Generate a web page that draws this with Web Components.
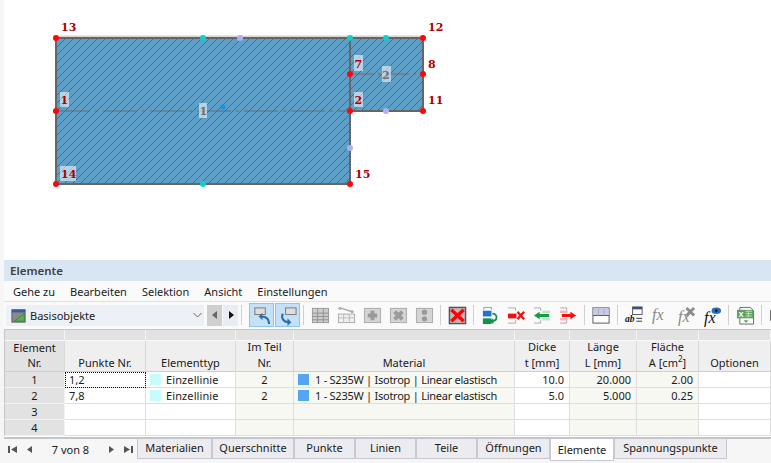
<!DOCTYPE html>
<html lang="de">
<head>
<meta charset="utf-8">
<title>Elemente</title>
<style>
  html, body { margin: 0; padding: 0; background: #f6f6f6; }
  body { width: 771px; height: 463px; overflow: hidden; font-family: "Noto Sans", "Liberation Sans", sans-serif; }
</style>
</head>
<body>
<fe-app>
  <fe-drawing></fe-drawing>
  <fe-panel title="Elemente">
    <fe-menu></fe-menu>
    <fe-toolbar></fe-toolbar>
    <fe-table></fe-table>
    <fe-tabs></fe-tabs>
  </fe-panel>
</fe-app>
<script>
(function() {
  var FONT = '"Noto Sans", "Liberation Sans", sans-serif'

  class FeApp extends HTMLElement {
    constructor() {
      super()
      this.attachShadow({ mode: 'open' }).innerHTML =
        '<style>:host{display:flex;flex-direction:column;width:771px;height:463px;padding-left:4px;box-sizing:border-box;background:#f6f6f6;color:#1a1a1a;font:11px ' + FONT + '}</style><slot></slot>'
    }
  }

  class FeDrawing extends HTMLElement {
    constructor() {
      super()
      var nodes = [[56,38],[423,38],[423,111],[350,111],[350,184],[56,184],[56,111],[350,74],[423,74]]
      var teal = [[203,38],[350,38],[386,38],[203,184]]
      var lilac = [[240,38],[386,111],[350,148]]
      function dots(list, color) {
        return list.map(function(p) {
          return '<circle cx="' + p[0] + '" cy="' + p[1] + '" r="3" fill="' + color + '"/>'
        }).join('')
      }
      function label(t, x, y, bx, by, bw, bh) {
        var box = bw ? '<rect x="' + bx + '" y="' + by + '" width="' + bw + '" height="' + bh + '" fill="#fff" fill-opacity=".55"/>' : ''
        return box + '<text x="' + x + '" y="' + y + '">' + t + '</text>'
      }
      this.attachShadow({ mode: 'open' }).innerHTML =
        '<style>:host{display:block;height:260px;background:#fff;flex:none}' +
        'svg{display:block}' +
        'text{font:bold 11px "DejaVu Serif",serif;fill:#a80000}' +
        '.m text{fill:#6e6e6e}</style>' +
        '<svg width="767" height="260" viewBox="4 0 767 260">' +
        '<defs><pattern id="h" width="8" height="8" patternUnits="userSpaceOnUse">' +
        '<rect width="8" height="8" fill="#5d9fc7"/><path d="M-1 1 1 -1M0 8 8 0M7 9 9 7" stroke="#5a6a75" stroke-width="1" fill="none"/></pattern></defs>' +
        '<path d="M56 37H423" stroke="#d6d6d6" stroke-width="3" fill="none"/>' +
        '<path d="M56 38H423V111H350V184H56Z" fill="url(#h)" stroke="#666" stroke-width="2"/>' +
        '<path d="M350 38V111" stroke="#666" stroke-width="2"/>' +
        '<path d="M56 111H350" stroke="#5f6f78" stroke-width="1" stroke-dasharray="34 5 3 5"/>' +
        '<path d="M350 74H423" stroke="#80695f" stroke-width="1" stroke-dasharray="24 4 3 4"/>' +
        dots(teal, '#12cfc9') + dots(lilac, '#aeb0f6') + dots(nodes, '#ff0606') +
        '<circle cx="223" cy="107" r="2.5" fill="#0a96f0"/>' +
        label('13', 61, 31) + label('12', 428, 31) + label('8', 428, 68) + label('11', 428, 104) + label('15', 355, 178) +
        label('1', 60.5, 104, 60, 92, 9, 15) + label('14', 61, 178, 60, 166, 16, 15) +
        label('7', 354.5, 68, 354, 55, 9, 16) + label('2', 354.5, 104, 354, 92, 9, 15) +
        '<g class="m">' + label('1', 199.5, 115, 199, 103, 8, 15) + label('2', 382, 79, 382, 66, 9, 16) + '</g>' +
        '</svg>'
    }
  }

  class FePanel extends HTMLElement {
    constructor() {
      super()
      this.attachShadow({ mode: 'open' }).innerHTML =
        '<style>:host{display:block;flex:1}' +
        '.head{height:21px;line-height:21px;background:#d8e5f3;padding-left:6px;font-weight:600;font-size:11.5px;color:#404040}</style>' +
        '<div class="head"></div><slot></slot>'
      this.shadowRoot.querySelector('.head').textContent = this.getAttribute('title')
    }
  }

  class FeMenu extends HTMLElement {
    constructor() {
      super()
      var items = ['Gehe zu', 'Bearbeiten', 'Selektion', 'Ansicht', 'Einstellungen']
      this.attachShadow({ mode: 'open' }).innerHTML =
        '<style>:host{display:flex;height:20px;line-height:22px;gap:15px;padding-left:9px;background:#fafafa;font-size:11px;box-sizing:border-box}' +
        'span{white-space:nowrap}</style>' +
        items.map(function(t) { return '<span>' + t + '</span>' }).join('')
    }
  }

  var ICONS = {
    base: '<rect x="1" y="2" width="15" height="14" fill="#8a8a8a" stroke="#555"/><rect x="1" y="2" width="15" height="3" fill="#3c5aa0"/><path d="M4 15 15 6V15Z" fill="#58b050" stroke="#2f7a2c" stroke-width=".7"/>',
    undo: '<rect x="3" y="2" width="11" height="7" fill="#ddd" stroke="#777"/><path d="M18 19C18 13 15 11 10 11" fill="none" stroke="#2c6ea8" stroke-width="2.2"/><path d="M7 11 11 7V15Z" fill="#2c6ea8"/>',
    redo: '<rect x="8" y="2" width="11" height="7" fill="#ddd" stroke="#777"/><path d="M5 8C3 13 6 17 11 17" fill="none" stroke="#2c6ea8" stroke-width="2.2"/><path d="M14 17 10 13V21Z" fill="#2c6ea8"/>',
    grid: '<rect x="1.5" y="2.5" width="17" height="15" fill="#ccc" stroke="#999"/><path d="M1.5 7.5H18.5M1.5 11H18.5M1.5 14.500H18.5M7 2.5V17.5M13 2.5V17.5" stroke="#8e8e8e"/>',
    link: '<rect x="1.5" y="8.500" width="17" height="9" fill="#f0f0f0" stroke="#aaa"/><path d="M1.500 12.500H18.500M7 8.500V17.500M13 8.500V17.500" stroke="#bbb"/><path d="M3 2 16 6" stroke="#aaa" stroke-width="1.500"/><circle cx="3" cy="2.500" r="1.500" fill="#aaa"/><circle cx="16" cy="6" r="1.500" fill="#aaa"/>',
    plus: '<rect x="1.500" y="2.500" width="17" height="15" fill="#d4d4d4" stroke="#aaa"/><path d="M10 5V15M5 10H15" stroke="#9a9a9a" stroke-width="4"/>',
    times: '<rect x="1.500" y="2.500" width="17" height="15" fill="#d4d4d4" stroke="#aaa"/><path d="M6 6 14 14M14 6 6 14" stroke="#9a9a9a" stroke-width="4"/>',
    dots: '<rect x="1.500" y="2.500" width="17" height="15" fill="#d4d4d4" stroke="#aaa"/><circle cx="10" cy="6.500" r="2.800" fill="#9a9a9a"/><circle cx="10" cy="13.500" r="2.800" fill="#9a9a9a"/>',
    del: '<rect x="1.500" y="1.500" width="17" height="17" fill="#bcbcbc" stroke="#555" stroke-width="1.500"/><path d="M3.500 4 16.500 16M16.500 4 3.500 16" stroke="#f00" stroke-width="3.500"/>',
    move: '<path d="M3 4V1.500H11V4" fill="none" stroke="#999"/><rect x="2" y="5" width="9" height="6" fill="#1e74c8"/><rect x="2" y="13" width="9" height="6" fill="#10924a"/><path d="M12 8C18 8 18 16 11 16" fill="none" stroke="#10924a" stroke-width="1.800"/><path d="M9 16 13 13V19Z" fill="#10924a"/>',
    rem: '<path d="M1 2H9V5M1 18H9V15" fill="none" stroke="#aaa"/><rect x="1" y="8" width="9" height="5" fill="#f01010"/><path d="M11 6 18 14M18 6 11 14" stroke="#f01010" stroke-width="2.400"/>',
    left: '<path d="M1 2H8V5M1 18H8V15" fill="none" stroke="#aaa"/><path d="M10 6H18M10 14H18" stroke="#bfe6cc" stroke-width="2.500"/><path d="M1 10 7 6V8.500H17V11.500H7V14Z" fill="#10a040"/>',
    right: '<path d="M1 2H8V5M1 18H8V15" fill="none" stroke="#aaa"/><path d="M1 6H9M1 14H9" stroke="#f6b4b4" stroke-width="2.500"/><path d="M18 10 12 6V8.500H3V11.500H12V14Z" fill="#f01010"/>',
    table: '<rect x="1" y="2" width="17" height="16" fill="#fff" stroke="#555"/><rect x="1.500" y="2.500" width="16" height="7.500" fill="#c9c9ee"/><path d="M1 10H18" stroke="#555"/><path d="M7 3V10M12.500 3V10" stroke="#aaa"/>',
    ab: '<rect x="8" y="1" width="10" height="8" fill="#fff" stroke="#555"/><rect x="8" y="1" width="10" height="2.500" fill="#3a4aa0"/><text x="0" y="17" font-family="Liberation Serif,serif" font-style="italic" font-weight="bold" font-size="10" fill="#111">ab</text><path d="M12 13H18M12 16H18" stroke="#333"/>',
    fx: '<text x="1" y="15" font-family="Liberation Serif,serif" font-style="italic" font-size="17" fill="#888">fx</text>',
    fxx: '<text x="1" y="17" font-family="Liberation Serif,serif" font-style="italic" font-size="17" fill="#888">fx</text><path d="M10 2 18 10M18 2 10 10" stroke="#8c8c8c" stroke-width="3"/>',
    fxe: '<text x="1" y="18" font-family="Liberation Serif,serif" font-style="italic" font-size="17" fill="#111">fx</text><ellipse cx="14" cy="5" rx="5" ry="3.500" fill="#2a70b8"/><circle cx="14" cy="5" r="1.500" fill="#123"/>',
    xls: '<path d="M4 1.500H15L18.500 5V19H4Z" fill="#fff" stroke="#666"/><rect x="1" y="4" width="17" height="9" fill="#5f9f5f"/><text x="2.500" y="11.500" font-family="Liberation Sans,sans-serif" font-weight="bold" font-size="8" fill="#fff">X</text><path d="M10 5.500H17M10 8H17M10 10.500H17M13 5V12" stroke="#d5ecd5" stroke-width=".8"/><path d="M8 15H13L10.500 18Z" fill="#5f9f5f"/>',
    print: '<path d="M5 5V1.500H14V5" fill="#fff" stroke="#666"/><rect x="1.500" y="5" width="17" height="10" fill="#ddd" stroke="#666"/><rect x="5" y="12" width="10" height="7" fill="#fff" stroke="#666"/>'
  }

  class FeTool extends HTMLElement {
    constructor() {
      super()
      this.attachShadow({ mode: 'open' }).innerHTML =
        '<style>:host{display:flex;align-items:center;justify-content:center;flex:none;width:26px;height:24px;box-sizing:border-box}' +
        ':host([on]){background:#c5e1f8;border:1px solid #90c4ee;width:25px}' +
        'svg{width:19px;height:19px;display:block;overflow:visible}</style>' +
        '<svg viewBox="0 0 20 20">' + ICONS[this.getAttribute('icon')] + '</svg>'
    }
  }

  class FeCombo extends HTMLElement {
    constructor() {
      super()
      this.attachShadow({ mode: 'open' }).innerHTML =
        '<style>:host{display:flex;align-items:center;flex:none;width:198px;height:21px;background:#edf0f6;font-size:11px;padding-left:5px;box-sizing:border-box}' +
        'svg{width:15px;height:15px;flex:none;margin-right:4px}span{flex:1}.c{margin-right:2px;width:9px;height:6px}</style>' +
        '<svg viewBox="0 0 17 17">' + ICONS.base + '</svg><span><slot></slot></span>' +
        '<svg class="c" viewBox="0 0 9 6"><path d="M.5 1 4.500 5 8.500 1" fill="none" stroke="#666"/></svg>'
    }
  }

  class FeToolbar extends HTMLElement {
    constructor() {
      super()
      var groups = [
        ['undo:on', 'redo:on'],
        ['grid', 'link', 'plus', 'times', 'dots'],
        ['del'],
        ['move', 'rem', 'left', 'right'],
        ['table'],
        ['ab', 'fx', 'fxx', 'fxe'],
        ['xls'],
        ['print']
      ]
      var html = groups.map(function(g, n) {
        return '<i' + (n === 0 ? ' class="a"' : '') + '></i>' + g.map(function(s) {
          var p = s.split(':')
          return '<fe-tool icon="' + p[0] + '"' + (p[1] ? ' on' : '') + '></fe-tool>'
        }).join('')
      }).join('')
      this.attachShadow({ mode: 'open' }).innerHTML =
        '<style>:host{display:flex;align-items:center;height:28px;padding:1px 0 2px 2px;box-sizing:border-box;background:#fafafa;border-top:1px solid #e0e0e0;overflow:hidden}' +
        'i{flex:none;width:1px;height:20px;background:#d0d0d0;margin:0 3px}i.a{margin-right:7px}' +
        '.nav{flex:none;width:15px;height:21px;display:flex;align-items:center;justify-content:center;background:#e8ecf4;margin-left:1px}' +
        '.nav.d{background:#cfcfcf;margin-left:3px}svg{width:6px;height:8px}' +
        'fe-tool[on]+fe-tool[on]{margin-left:1px}</style>' +
        '<fe-combo>Basisobjekte</fe-combo>' +
        '<div class="nav d"><svg viewBox="0 0 6 8"><path d="M5 0V8L0 4Z" fill="#666"/></svg></div>' +
        '<div class="nav"><svg viewBox="0 0 6 8"><path d="M1 0V8L6 4Z" fill="#111"/></svg></div>' + html
    }
  }

  class FeTable extends HTMLElement {
    constructor() {
      super()
      var cream = [0,0,0,1,1,0,1,1,0]
      var heads = [
        ['Element<br>Nr.', 'c first'], ['Punkte Nr.', 'c'], ['Elementtyp', 'c'], ['Im Teil<br>Nr.', 'c'], ['Material', 'c'],
        ['Dicke<br>t [mm]', 'c'], ['Länge<br>L [mm]', 'c'], ['Fläche<br>A [cm<sup>2</sup>]', 'c'], ['Optionen', 'c']
      ]
      var rows = [
        ['1', '1,2', 'Einzellinie', '2', '1 - S235W | Isotrop | Linear elastisch', '10.0', '20.000', '2.00', ''],
        ['2', '7,8', 'Einzellinie', '2', '1 - S235W | Isotrop | Linear elastisch', '5.0', '5.000', '0.25', ''],
        ['3', '', '', '', '', '', '', '', ''],
        ['4', '', '', '', '', '', '', '', '']
      ]
      var html = ''
      for (var i = 0; i < 9; i++) html += '<div class="band' + (i === 0 ? ' lead' : '') + '"></div>'
      heads.forEach(function(h) { html += '<div class="h ' + h[1] + '"><span>' + h[0] + '</span></div>' })
      rows.forEach(function(r, ri) {
        r.forEach(function(v, ci) {
          var cls = 'd'
          if (ci === 0) cls += ' no'
          if (cream[ci]) cls += ' cream'
          if (ci === 3) cls += ' mid'
          if (ci >= 5 && ci <= 7) cls += ' num'
          var inner = v
          if (ci === 1 && ri === 0) cls += ' focus'
          if (ci === 2 && v) inner = '<b class="sw s5" style="background:#c8fbfd"></b><span class="t">' + v + '</span>'
          if (ci === 4 && v) inner = '<b class="sw" style="background:#55a5f5"></b><span class="t2">' + v + '</span>'
          html += '<div class="' + cls + '">' + inner + '</div>'
        })
      })
      this.attachShadow({ mode: 'open' }).innerHTML =
        '<style>:host{display:grid;flex:none;grid-template-columns:61px 81px 90px 58px 221px 55px 67px 62px 72px;grid-template-rows:10px 32px 16px 16px 16px 16px;' +
        'height:110px;box-sizing:border-box;border-top:1px solid #c4c4cc;border-bottom:2px solid #c4c4cc;background:#fff;font-size:11px;overflow:hidden}' +
        '.band{background:#e2e2e2;border-right:1px solid #f4f4f4}' +
        '.lead,.first,.no{border-left:1px solid #c4c4cc}' +
        '.h{background:#efefef;border-right:1px solid #d8d8d8;border-bottom:1px solid #cfcfcf;border-top:1px solid #fafafa;box-sizing:border-box;display:flex;align-items:flex-end;justify-content:center;text-align:center;line-height:16px;white-space:nowrap}' +
        '.h.first{background:#e2e2e2;line-height:15px;padding-bottom:1px}' +
        'sup{font-size:8px;line-height:0}' +
        '.d{border-right:1px solid #dedede;border-bottom:1px solid #dedede;box-sizing:border-box;display:flex;align-items:center;line-height:15px;padding:0 4px;white-space:nowrap;min-width:0}' +
        '.no{background:#e2e2e2;justify-content:center;border-bottom-color:#f2f2f2;border-right-color:#f2f2f2}' +
        '.cream{background:#f8f8f2}.mid{justify-content:center}.num{justify-content:flex-end;padding-right:5px}' +
        '.focus{outline:1px dotted #111;outline-offset:-1px}' +
        '.sw{flex:none;width:11px;height:11px;margin:0 6px 0 0;display:block}.sw.s5{margin-right:5px}.t{letter-spacing:.1px}.t2{letter-spacing:-.25px}</style>' + html
    }
  }

  class FeTabs extends HTMLElement {
    constructor() {
      super()
      var tabs = [
        ['Materialien', 75], ['Querschnitte', 82], ['Punkte', 61], ['Linien', 61], ['Teile', 61],
        ['Öffnungen', 73], ['Elemente', 64], ['Spannungspunkte', 113]
      ]
      function nav(d) { return '<svg width="9" height="9" viewBox="0 0 9 9"><path d="' + d + '" fill="#555"/></svg>' }
      this.attachShadow({ mode: 'open' }).innerHTML =
        '<style>:host{display:flex;flex:none;height:24px;font-size:11px;background:#f6f6f6}' +
        '.pager{flex:none;width:133px;display:flex;align-items:center;padding:0 4px 3px 4px;box-sizing:border-box;gap:8px}' +
        '.pager span{flex:1;text-align:center}.t{flex:none;height:20px;line-height:18px;text-align:center;box-sizing:border-box;background:#ececf0;border:1px solid #c8c8d0;border-top:0}' +
        '.t.on{background:#fff;height:22px;line-height:21px}</style>' +
        '<div class="pager">' + nav('M0 1H2V8H0ZM9 1V8L3 4.500Z') + nav('M7 1V8L2 4.500Z') + '<span>7 von 8</span>' + nav('M2 1V8L7 4.500Z') + nav('M0 1V8L6 4.500ZM7 1H9V8H7Z') + '</div>' +
        tabs.map(function(t) {
          return '<div class="t' + (t[0] === 'Elemente' ? ' on' : '') + '" style="width:' + t[1] + 'px">' + t[0] + '</div>'
        }).join('')
    }
  }

  customElements.define('fe-app', FeApp)
  customElements.define('fe-drawing', FeDrawing)
  customElements.define('fe-panel', FePanel)
  customElements.define('fe-menu', FeMenu)
  customElements.define('fe-tool', FeTool)
  customElements.define('fe-combo', FeCombo)
  customElements.define('fe-toolbar', FeToolbar)
  customElements.define('fe-table', FeTable)
  customElements.define('fe-tabs', FeTabs)
})()
</script>
</body>
</html>
